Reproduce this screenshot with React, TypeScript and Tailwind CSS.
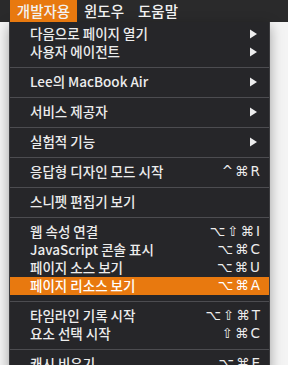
import React from "react";

type Item =
  | { type: "sep" }
  | { type: "item"; label: string; arrow?: boolean; shortcut?: string; active?: boolean };

const items: Item[] = [
  { type: "item", label: "다음으로 페이지 열기", arrow: true },
  { type: "item", label: "사용자 에이전트", arrow: true },
  { type: "sep" },
  { type: "item", label: "Lee의 MacBook Air", arrow: true },
  { type: "sep" },
  { type: "item", label: "서비스 제공자", arrow: true },
  { type: "sep" },
  { type: "item", label: "실험적 기능", arrow: true },
  { type: "sep" },
  { type: "item", label: "응답형 디자인 모드 시작", shortcut: "^⌘R" },
  { type: "sep" },
  { type: "item", label: "스니펫 편집기 보기" },
  { type: "sep" },
  { type: "item", label: "웹 속성 연결", shortcut: "⌥⇧⌘I" },
  { type: "item", label: "JavaScript 콘솔 표시", shortcut: "⌥⌘C" },
  { type: "item", label: "페이지 소스 보기", shortcut: "⌥⌘U" },
  { type: "item", label: "페이지 리소스 보기", shortcut: "⌥⌘A", active: true },
  { type: "sep" },
  { type: "item", label: "타임라인 기록 시작", shortcut: "⌥⇧⌘T" },
  { type: "item", label: "요소 선택 시작", shortcut: "⇧⌘C" },
  { type: "sep" },
  { type: "item", label: "캐시 비우기", shortcut: "⌥⌘E" },
];

const font = { fontFamily: '"Noto Sans CJK KR", "Noto Sans", sans-serif' };

export default function App() {
  return (
    <div className="w-[288px] h-[365px] overflow-hidden bg-[#f4f4f4] relative" style={font}>
      <div className="h-[22px] bg-[#2a2a2b] flex items-stretch pl-[10px] text-[14.5px] font-medium text-[#f2f2f2]">
        <div className="w-[67px] bg-[#e8790f] flex items-center justify-center leading-none">개발자용</div>
        <div className="w-[54px] flex items-center justify-center leading-none">윈도우</div>
        <div className="w-[54px] flex items-center justify-center leading-none">도움말</div>
      </div>
      <div className="ml-[9px] w-[261px] bg-[#262629] border-x border-[#3c3c3f] pt-[3px] shadow-[0_4px_12px_rgba(0,0,0,0.35)]">
        {items.map((it, i) =>
          it.type === "sep" ? (
            <div key={i} className="h-[12px] flex items-center">
              <div className="h-px w-full bg-[#4c4c50]" />
            </div>
          ) : (
            <div
              key={i}
              className={`h-[18px] flex items-center pl-[20px] pr-[9px] text-[13.5px] font-medium leading-none text-[#ededed] ${
                it.active ? "bg-[#e8790f] text-white" : ""
              }`}
            >
              <span className="flex-1">{it.label}</span>
              {it.arrow && (
                <svg width="7" height="10" viewBox="0 0 7 10" className="mr-[3px]">
                  <path d="M0 0.5 L7 5 L0 9.5 Z" fill="#ededed" />
                </svg>
              )}
              {it.shortcut && (
                <span
                  className="text-[13.5px] font-medium tracking-[2px] mr-[-2px]"
                  style={{ fontFamily: '"DejaVu Sans", sans-serif' }}
                >
                  {it.shortcut}
                </span>
              )}
            </div>
          )
        )}
      </div>
    </div>
  );
}
